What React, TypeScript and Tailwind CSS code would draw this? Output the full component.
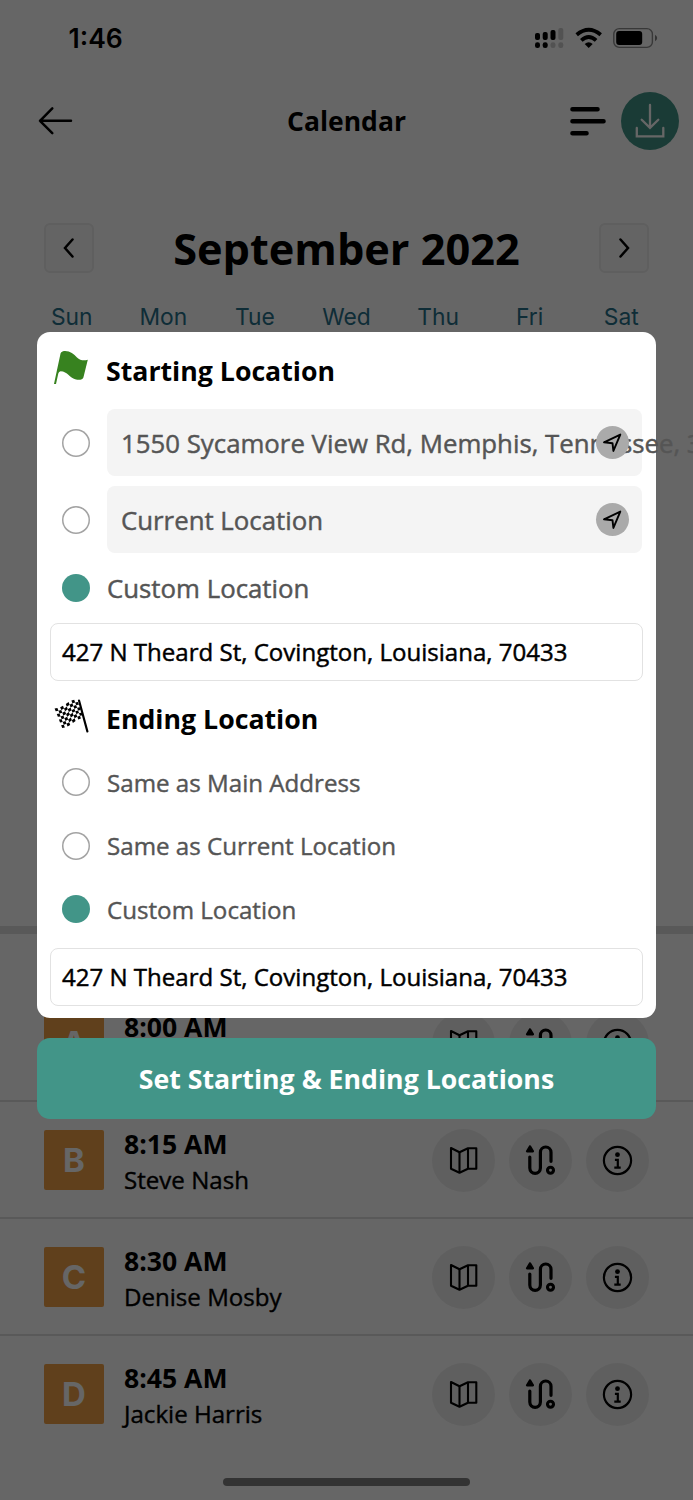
import { useState } from "react";

const DAYS = ["Sun", "Mon", "Tue", "Wed", "Thu", "Fri", "Sat"];

const APPOINTMENTS = [
  { letter: "A", time: "8:00 AM", name: "" },
  { letter: "B", time: "8:15 AM", name: "Steve Nash" },
  { letter: "C", time: "8:30 AM", name: "Denise Mosby" },
  { letter: "D", time: "8:45 AM", name: "Jackie Harris" },
];

const StatusIcons = () => (
  <svg className="ml-auto mr-[33px]" width="126" height="24" viewBox="534 26 126 24">
    <g fill="#000">
      <rect x="535" y="33" width="5" height="7" rx="2" />
      <rect x="542.7" y="32" width="5" height="8" rx="2" />
      <rect x="550.5" y="30" width="5" height="10" rx="2" />
      <rect x="558.3" y="28" width="5" height="12" rx="2" opacity="0.2" />
      <rect x="535" y="42.3" width="5" height="5.7" rx="2.3" />
      <rect x="542.7" y="42.3" width="5" height="5.7" rx="2.3" />
      <rect x="550.5" y="42.3" width="5" height="5.7" rx="2.3" opacity="0.2" />
      <rect x="558.3" y="42.3" width="5" height="5.7" rx="2.3" opacity="0.2" />
      <path d="M588.7 48 L584.7 43.9 Q588.7 40.6 592.7 43.9 Z" />
    </g>
    <g fill="none" stroke="#000" strokeWidth="3.8">
      <path d="M576.7 34.8 Q588.7 24.8 600.7 34.8" />
      <path d="M581.3 40.4 Q588.7 33.6 596.1 40.4" />
    </g>
    <rect x="613.8" y="28.6" width="38.6" height="18.8" rx="5.5" fill="none" stroke="#000" strokeOpacity="0.45" strokeWidth="1.4" />
    <rect x="616.2" y="31" width="26" height="14" rx="3" fill="#000" />
    <path d="M655 34.7 Q657.2 36 657.2 38 Q657.2 40 655 41.3 Z" fill="#000" opacity="0.5" />
  </svg>
);

const FlagIcon = () => (
  <svg width="36" height="36" viewBox="53 350 36 36">
    <path
      d="M54 384 L60.6 353.2 Q61 351.8 62.5 351.4 C69 350 73.5 354 77 357.5 C80 360.5 84 360.8 87.8 359.8 L83.4 377.5 C82.8 379.6 79.5 380.3 76 379.5 C70 378.2 67.5 371.3 60.6 371.2 Q58.8 371.5 58.3 373.4 L56 384 Z"
      fill="#37821f"
    />
  </svg>
);

// bilinear point on the cloth of the flag, with a small wave
const clothPoint = (u: number, v: number) => {
  const wave = Math.sin(u * Math.PI * 2) * 1.1;
  const x = (1 - v) * (54.6 + 22.4 * u) + v * (62.2 + 21.4 * u);
  const y = (1 - v) * (708.4 - 9 * u) + v * (728 - 10 * u) + wave;
  return `${x.toFixed(2)} ${y.toFixed(2)}`;
};

const CheckeredFlagIcon = () => {
  const cols = 8;
  const rows = 7;
  let d = "";
  for (let i = 0; i < cols; i++) {
    for (let j = 0; j < rows; j++) {
      if ((i + j) % 2) continue;
      d += `M${clothPoint(i / cols, j / rows)}L${clothPoint((i + 1) / cols, j / rows)}L${clothPoint((i + 1) / cols, (j + 1) / rows)}L${clothPoint(i / cols, (j + 1) / rows)}Z`;
    }
  }
  return (
    <svg width="36" height="36" viewBox="53 698 36 36">
      <path d={d} fill="#000" />
      <path d="M79 700.5 L87.4 731.5" stroke="#000" strokeWidth="2.2" strokeLinecap="round" />
    </svg>
  );
};

const LocateIcon = () => (
  <div className="relative flex size-[33px] shrink-0 items-center justify-center rounded-full bg-[#aaaaaa]">
    <svg width="33" height="33" viewBox="596 426 33 33" fill="none" stroke="#000" strokeWidth="1.9" strokeLinejoin="round">
      <path d="M604 442.3 L620.3 434.6 L613.4 450.9 L612.5 443.2 Z" />
    </svg>
  </div>
);

const MapIcon = () => (
  <svg width="63" height="63" viewBox="432 1128.5 63 63" fill="none" stroke="#000" strokeWidth="2.1" strokeLinejoin="round">
    <path d="M451 1147.5 L459.5 1151.7 L468 1147.7 H476.3 V1168.3 H468 L459.5 1172.2 L451 1168.3 Z" />
    <path d="M459.5 1151.7 V1172.2 M468 1147.7 V1168.3" />
  </svg>
);

const RouteIcon = () => (
  <svg width="63" height="63" viewBox="509 1129 63 63" fill="none" stroke="#000" strokeWidth="3.2" strokeLinecap="round" strokeLinejoin="round">
    <path d="M530 1146.3 L527 1151.3 H533 Z" fill="#000" strokeWidth="2.2" />
    <path d="M529.8 1157 V1168 A5.3 5.3 0 0 0 540.4 1168 V1152.3 A5.3 5.3 0 0 1 551 1152.3 V1161.3" />
    <circle cx="550.5" cy="1170.3" r="3" strokeWidth="3.1" />
  </svg>
);

const InfoIcon = () => (
  <svg width="63" height="63" viewBox="586 1128.5 63 63" fill="none" stroke="#000" strokeWidth="2.2">
    <circle cx="617.5" cy="1160" r="13.6" />
    <circle cx="617.5" cy="1154.2" r="2.4" fill="#000" stroke="none" />
    <path d="M614.9 1159.3 H617.8 V1167 M614.3 1167.2 H620.7" />
  </svg>
);

const IconButton = ({ children }: { children: React.ReactNode }) => (
  <button className="size-[63px] overflow-hidden rounded-full bg-[#eeeeee]">{children}</button>
);

const AppointmentRow = ({ letter, time, name }: { letter: string; time: string; name: string }) => (
  <div className="flex h-[117px] shrink-0 items-center border-b-2 border-[#dedede] pt-px pr-11 pl-11">
    <div className="flex size-[60px] items-center justify-center rounded-[2px] bg-[#f0a046] pt-px font-['Inter'] text-[33px] font-bold text-white">
      {letter}
    </div>
    <div className="ml-5 flex h-[72px] flex-col">
      <div className="pt-px text-[26.6px] leading-[38px] font-bold">{time}</div>
      <div className="text-[24.1px] leading-[34px] [-webkit-text-stroke:0.4px]">{name}</div>
    </div>
    <div className="ml-auto flex gap-[14px]">
      <IconButton>
        <MapIcon />
      </IconButton>
      <IconButton>
        <RouteIcon />
      </IconButton>
      <IconButton>
        <InfoIcon />
      </IconButton>
    </div>
  </div>
);

const NavButton = ({ d }: { d: string }) => (
  <button className="flex size-[50px] items-center justify-center rounded-md border-2 border-[#ededed] bg-[#fbfbfb]">
    <svg width="14" height="22" viewBox="0 0 14 22" fill="none" stroke="#000" strokeWidth="2.5" strokeLinecap="round">
      <path d={d} />
    </svg>
  </button>
);

const CalendarScreen = () => (
  <div className="flex h-full flex-col bg-white">
    <div className="flex h-[76px] shrink-0 items-center">
      <div className="pt-[2px] pl-[68.5px] font-['Inter'] text-[26.5px] font-semibold">1:46</div>
      <StatusIcons />
    </div>

    <div className="grid h-[90px] shrink-0 grid-cols-[1fr_auto_1fr] items-center">
      <div className="pl-[38px]">
        <svg width="36" height="30" viewBox="38 106 36 30" fill="none" stroke="#000" strokeWidth="2.5" strokeLinecap="round" strokeLinejoin="round">
          <path d="M71 120.8 H40 M52.3 108.3 L40 120.8 L52.3 133.2" />
        </svg>
      </div>
      <div className="pt-[2px] text-center text-[26.5px] font-bold">Calendar</div>
      <div className="flex items-center justify-end gap-[14px] pr-[14px]">
        <svg className="shrink-0" width="37" height="32" viewBox="570.5 105.5 37 32" fill="none" stroke="#000" strokeWidth="4.6" strokeLinecap="round">
          <path d="M573 109.7 H598 M573 121.8 H604 M573 133.8 H587" />
        </svg>
        <div className="size-[58px] shrink-0 rounded-full bg-[#429588]">
          <svg width="58" height="58" viewBox="621 92 58 58" fill="none" stroke="#fff" strokeWidth="2.3" strokeLinecap="round">
            <path d="M650 105 V127.5 M641.7 119.7 L650 127.8 L658.3 119.7 M636.8 128 V136.3 H663.3 V128" />
          </svg>
        </div>
      </div>
    </div>

    <div className="mt-[57px] flex h-[50px] shrink-0 items-center justify-between px-11">
      <NavButton d="M10.5 2.5 L3 11 L10.5 19.5" />
      <div className="pt-[2px] text-[43.3px] leading-[50px] font-bold">September 2022</div>
      <NavButton d="M3.5 2.5 L11 11 L3.5 19.5" />
    </div>

    <div className="mt-[29px] grid shrink-0 grid-cols-7 px-[26px] text-center font-['Inter'] text-[22.8px] leading-[29px] text-[#26708a]">
      {DAYS.map((day) => (
        <div key={day}>{day}</div>
      ))}
    </div>

    <div className="mt-[595px] h-2 shrink-0 bg-[#dedede]" />
    <div className="mt-[51px] flex flex-col">
      {APPOINTMENTS.slice(0, 3).map((item) => (
        <AppointmentRow key={item.letter} {...item} />
      ))}
      <div className="h-[115px] overflow-hidden">
        <AppointmentRow {...APPOINTMENTS[3]} />
      </div>
    </div>
    <div className="mx-auto mt-[27px] h-2 w-[247px] shrink-0 rounded-full bg-[#808080]" />
  </div>
);

const Radio = ({ checked, onClick }: { checked: boolean; onClick: () => void }) => (
  <button
    onClick={onClick}
    className={
      checked
        ? "size-7 shrink-0 rounded-full bg-[#429588]"
        : "size-7 shrink-0 rounded-full bg-white shadow-[inset_0_0_0_1.5px_#a3a3a3]"
    }
  />
);

const LocationOption = ({ text, checked, onClick }: { text: string; checked: boolean; onClick: () => void }) => (
  <div className="flex items-center gap-[17.5px] pl-[11.5px]">
    <Radio checked={checked} onClick={onClick} />
    <div className="flex h-[67px] w-[535px] items-center justify-between rounded-lg bg-[#f4f4f4] pr-[13px] pl-[14px]">
      <div className="w-[460px] pt-px text-[25.8px] whitespace-nowrap [-webkit-text-stroke:0.45px]">{text}</div>
      <LocateIcon />
    </div>
  </div>
);

const PlainOption = ({ text, checked, onClick }: { text: string; checked: boolean; onClick: () => void }) => (
  <div className="flex h-[63.5px] items-center gap-[17.5px] pl-[11.5px]">
    <Radio checked={checked} onClick={onClick} />
    <div className="pt-px text-[24.15px] [-webkit-text-stroke:0.4px]">{text}</div>
  </div>
);

const AddressInput = ({ value }: { value: string }) => (
  <div className="flex h-[57.5px] w-[592.5px] items-center rounded-lg border-[1.5px] border-[#e2e2e2] bg-white pt-px pl-[11px] text-[24.05px] text-black [-webkit-text-stroke:0.45px]">
    {value}
  </div>
);

export default function App() {
  const [start, setStart] = useState(2);
  const [end, setEnd] = useState(2);

  return (
    <div className="relative h-[1500px] w-[693px] overflow-hidden font-['Open_Sans',sans-serif] text-black">
      <CalendarScreen />

      {/* route locations modal */}
      <div className="absolute inset-0 flex flex-col bg-black/60 px-[37px] pt-[332px]">
        <div className="h-[686px] w-[619px] rounded-[13px] bg-white pl-[13px] text-[#555555]">
          <div className="flex h-[77px] items-center gap-[17px] pl-[3px] text-[26.7px] font-bold text-black">
            <div className="-mt-1.5">
              <FlagIcon />
            </div>
            <div className="pt-px">Starting Location</div>
          </div>
          <div className="flex flex-col gap-[10px]">
            <LocationOption
              text="1550 Sycamore View Rd, Memphis, Tennessee, 38134"
              checked={start === 0}
              onClick={() => setStart(0)}
            />
            <LocationOption text="Current Location" checked={start === 1} onClick={() => setStart(1)} />
          </div>
          <div className="flex h-[70px] items-center gap-[17.5px] pl-[11.5px]">
            <Radio checked={start === 2} onClick={() => setStart(2)} />
            <div className="text-[25.8px] [-webkit-text-stroke:0.45px]">Custom Location</div>
          </div>
          <AddressInput value="427 N Theard St, Covington, Louisiana, 70433" />

          <div className="flex h-[70px] items-center gap-[17px] pl-[3px] text-[26.7px] font-bold text-black">
            <CheckeredFlagIcon />
            <div className="mt-[8px]">Ending Location</div>
          </div>
          <PlainOption text="Same as Main Address" checked={end === 0} onClick={() => setEnd(0)} />
          <PlainOption text="Same as Current Location" checked={end === 1} onClick={() => setEnd(1)} />
          <PlainOption text="Custom Location" checked={end === 2} onClick={() => setEnd(2)} />
          <div className="pt-[7px]">
            <AddressInput value="427 N Theard St, Covington, Louisiana, 70433" />
          </div>
        </div>
        <button className="mt-5 h-[80.5px] w-[619px] rounded-[13px] bg-[#429588] pt-px text-[26.7px] font-bold text-white">
          Set Starting &amp; Ending Locations
        </button>
      </div>
    </div>
  );
}
